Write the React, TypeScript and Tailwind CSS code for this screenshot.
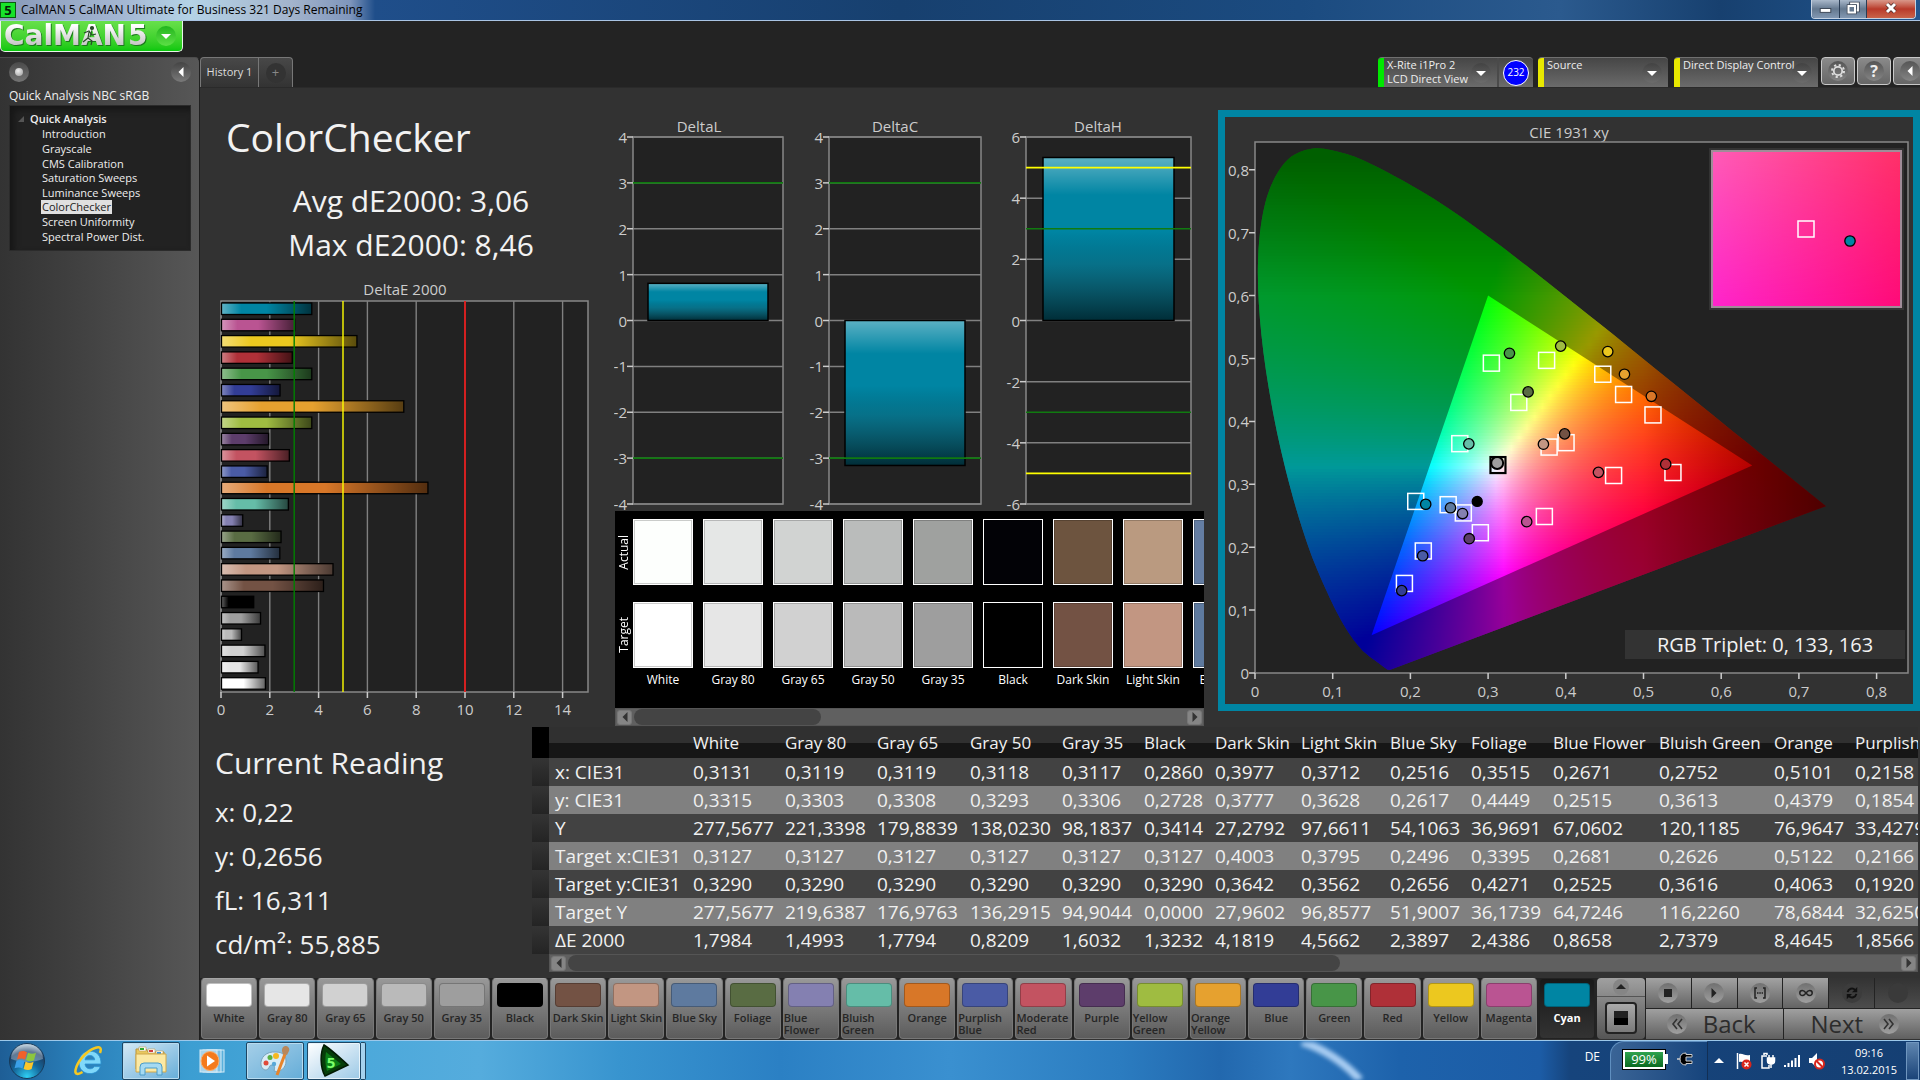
import type { ReactNode } from 'react'
import clsx from 'clsx'

interface Patch {
  name: string
  color: string
  actual: string
  dE: number
  x: number
  y: number
  tx: number
  ty: number
}

const PATCHES: Patch[] = [
  { name: 'White', color: '#ffffff', actual: '#fdfffd', dE: 1.8, x: 0.3131, y: 0.3315, tx: 0.3127, ty: 0.329 },
  { name: 'Gray 80', color: '#e6e6e6', actual: '#e5e7e6', dE: 1.5, x: 0.3119, y: 0.3303, tx: 0.3127, ty: 0.329 },
  { name: 'Gray 65', color: '#d1d1d1', actual: '#d1d3d2', dE: 1.78, x: 0.3119, y: 0.3308, tx: 0.3127, ty: 0.329 },
  { name: 'Gray 50', color: '#bababa', actual: '#babcbb', dE: 0.82, x: 0.3118, y: 0.3293, tx: 0.3127, ty: 0.329 },
  { name: 'Gray 35', color: '#9e9e9e', actual: '#9fa19f', dE: 1.6, x: 0.3117, y: 0.3306, tx: 0.3127, ty: 0.329 },
  { name: 'Black', color: '#000000', actual: '#020206', dE: 1.32, x: 0.286, y: 0.2728, tx: 0.3127, ty: 0.329 },
  { name: 'Dark Skin', color: '#735244', actual: '#6d543f', dE: 4.18, x: 0.3985, y: 0.3802, tx: 0.4003, ty: 0.3662 },
  { name: 'Light Skin', color: '#c29682', actual: '#ba9a80', dE: 4.57, x: 0.3712, y: 0.3638, tx: 0.3785, ty: 0.3592 },
  { name: 'Blue Sky', color: '#5e7a9f', actual: '#647da2', dE: 2.39, x: 0.2516, y: 0.2627, tx: 0.2486, ty: 0.2676 },
  { name: 'Foliage', color: '#596c43', actual: '#5c6d42', dE: 2.44, x: 0.3515, y: 0.4469, tx: 0.3395, ty: 0.4301 },
  { name: 'Blue Flower', color: '#8480b1', actual: '#8480b1', dE: 0.87, x: 0.2671, y: 0.2535, tx: 0.2681, ty: 0.2545 },
  { name: 'Bluish Green', color: '#65bda8', actual: '#65bda8', dE: 2.74, x: 0.2752, y: 0.3643, tx: 0.2636, ty: 0.3646 },
  { name: 'Orange', color: '#d87728', actual: '#d87728', dE: 8.46, x: 0.5101, y: 0.4399, tx: 0.5122, ty: 0.4103 },
  { name: 'Purplish Blue', color: '#4a5ba5', actual: '#4a5ba5', dE: 1.87, x: 0.2158, y: 0.1864, tx: 0.2166, ty: 0.194 },
  { name: 'Moderate Red', color: '#c35361', actual: '#c35361', dE: 2.78, x: 0.442, y: 0.319, tx: 0.4615, ty: 0.314 },
  { name: 'Purple', color: '#5d3d6b', actual: '#5d3d6b', dE: 1.93, x: 0.2757, y: 0.2135, tx: 0.29, ty: 0.223 },
  { name: 'Yellow Green', color: '#9fbc41', actual: '#9fbc41', dE: 3.7, x: 0.3934, y: 0.5197, tx: 0.3753, ty: 0.497 },
  { name: 'Orange Yellow', color: '#e6a12f', actual: '#e6a12f', dE: 7.47, x: 0.4755, y: 0.475, tx: 0.4744, ty: 0.4428 },
  { name: 'Blue', color: '#323d96', actual: '#323d96', dE: 2.4, x: 0.1888, y: 0.131, tx: 0.1923, ty: 0.1424 },
  { name: 'Green', color: '#489548', actual: '#489548', dE: 3.7, x: 0.3275, y: 0.5083, tx: 0.3042, ty: 0.4926 },
  { name: 'Red', color: '#af3038', actual: '#af3038', dE: 2.9, x: 0.5286, y: 0.332, tx: 0.5379, ty: 0.3187 },
  { name: 'Yellow', color: '#ecc81f', actual: '#ecc81f', dE: 5.55, x: 0.454, y: 0.511, tx: 0.4476, ty: 0.475 },
  { name: 'Magenta', color: '#ba5492', actual: '#ba5492', dE: 3, x: 0.3497, y: 0.2406, tx: 0.3724, ty: 0.2488 },
  { name: 'Cyan', color: '#0085a3', actual: '#0085a3', dE: 3.7, x: 0.2197, y: 0.2683, tx: 0.2069, ty: 0.2728 },
]

const TREE = [
  'Introduction',
  'Grayscale',
  'CMS Calibration',
  'Saturation Sweeps',
  'Luminance Sweeps',
  'ColorChecker',
  'Screen Uniformity',
  'Spectral Power Dist.',
]

const COLUMNS = [
  { name: 'White', width: 92 },
  { name: 'Gray 80', width: 92 },
  { name: 'Gray 65', width: 93 },
  { name: 'Gray 50', width: 92 },
  { name: 'Gray 35', width: 82 },
  { name: 'Black', width: 71 },
  { name: 'Dark Skin', width: 86 },
  { name: 'Light Skin', width: 89 },
  { name: 'Blue Sky', width: 81 },
  { name: 'Foliage', width: 82 },
  { name: 'Blue Flower', width: 106 },
  { name: 'Bluish Green', width: 115 },
  { name: 'Orange', width: 81 },
  { name: 'Purplish Blue', width: 120 },
]

const ROWS = [
  { label: 'x: CIE31', values: ['0,3131', '0,3119', '0,3119', '0,3118', '0,3117', '0,2860', '0,3977', '0,3712', '0,2516', '0,3515', '0,2671', '0,2752', '0,5101', '0,2158'] },
  { label: 'y: CIE31', values: ['0,3315', '0,3303', '0,3308', '0,3293', '0,3306', '0,2728', '0,3777', '0,3628', '0,2617', '0,4449', '0,2515', '0,3613', '0,4379', '0,1854'] },
  { label: 'Y', values: ['277,5677', '221,3398', '179,8839', '138,0230', '98,1837', '0,3414', '27,2792', '97,6611', '54,1063', '36,9691', '67,0602', '120,1185', '76,9647', '33,4279'] },
  { label: 'Target x:CIE31', values: ['0,3127', '0,3127', '0,3127', '0,3127', '0,3127', '0,3127', '0,4003', '0,3795', '0,2496', '0,3395', '0,2681', '0,2626', '0,5122', '0,2166'] },
  { label: 'Target y:CIE31', values: ['0,3290', '0,3290', '0,3290', '0,3290', '0,3290', '0,3290', '0,3642', '0,3562', '0,2656', '0,4271', '0,2525', '0,3616', '0,4063', '0,1920'] },
  { label: 'Target Y', values: ['277,5677', '219,6387', '176,9763', '136,2915', '94,9044', '0,0000', '27,9602', '96,8577', '51,9007', '36,1739', '64,7246', '116,2260', '78,6844', '32,6250'] },
  { label: 'ΔE 2000', values: ['1,7984', '1,4993', '1,7794', '0,8209', '1,6032', '1,3232', '4,1819', '4,5662', '2,3897', '2,4386', '0,8658', '2,7379', '8,4645', '1,8566'] },
]

/* ---------- title bar, logo ---------- */

function TitleBar() {
  return (
    <header className="flex h-[21px] items-center border-b border-[#a9c4e4] bg-[linear-gradient(90deg,#8799b8_0px,#a3b6d2_120px,#b4d3e6_190px,#a4b4cc_290px,#7f96bc_350px,#1f4e8a_375px,#17406f_900px,#1b4b80_1300px,#2b5a8e_1560px,#17406f_1720px,#22568f_100%)]">
      <svg viewBox="0 0 16 16" className="size-4 shrink-0 overflow-visible">
        <rect width="16" height="16" fill="#0a5c10" />
        <rect x="1" y="1" width="14" height="14" fill="#17e32a" />
        <text x="8" y="13" textAnchor="middle" fontSize="13" fontWeight="700" fill="#041f06">5</text>
      </svg>
      <h1 className="ml-[5px] flex-1 truncate text-[12px] leading-[18px] text-black">
        CalMAN 5 CalMAN Ultimate for Business 321 Days Remaining
      </h1>
      <div className="mr-1 flex h-[19px] self-start overflow-hidden rounded-b-[4px] border border-t-0 border-[#c5d2e2]">
        <button aria-label="Minimize" className="flex w-7 items-center justify-center border-r border-[#2a3d55] bg-linear-to-b from-[#a9b8ca] via-[#64788f] to-[#8398b2]">
          <svg viewBox="0 0 28 18" className="h-[18px] w-7">
            <rect x="8.500" y="8.500" width="11" height="4" fill="#fff" stroke="#3c4656" />
          </svg>
        </button>
        <button aria-label="Restore" className="flex w-[27px] items-center justify-center border-r border-[#2a3d55] bg-linear-to-b from-[#a9b8ca] via-[#64788f] to-[#8398b2]">
          <svg viewBox="0 0 18 18" className="size-[18px]" fill="#64788f">
            <path d="M7 3.500h7v7h-7z" stroke="#3c4656" strokeWidth="3.500" />
            <path d="M7 3.500h7v7h-7z" stroke="#fff" strokeWidth="1.800" />
            <path d="M4.500 6h6.500v6.500h-6.500z" stroke="#3c4656" strokeWidth="3.500" />
            <path d="M4.500 6h6.500v6.500h-6.500z" stroke="#fff" strokeWidth="2" />
          </svg>
        </button>
        <button aria-label="Close" className="flex w-12 items-center justify-center bg-linear-to-b from-[#d8978a] via-[#b8392a] to-[#c8634a]">
          <svg viewBox="0 0 18 18" className="size-[18px]">
            <path d="M5 4l8 8M13 4l-8 8" stroke="#4a2a2a" strokeWidth="4.500" />
            <path d="M5 4l8 8M13 4l-8 8" stroke="#fff" strokeWidth="3" />
          </svg>
        </button>
      </div>
    </header>
  )
}

function LogoBar() {
  return (
    <div className="h-9">
      <div className="flex h-[31px] w-[183px] items-center rounded-b-[5px] border border-t-0 border-[#e8f5e8] bg-linear-to-b from-[#67e04a] to-[#06c80c]">
        <svg viewBox="0 0 150 30" className="h-[30px] w-[150px] overflow-visible">
          <defs>
            <linearGradient id="silver" x1="0" y1="0" x2="0" y2="1">
              <stop offset="0.2" stopColor="#ffffff" />
              <stop offset="0.8" stopColor="#c4c4c4" />
            </linearGradient>
          </defs>
          <g fontFamily="DejaVu Sans" fontWeight="700" fontSize="28" fill="url(#silver)" className="drop-shadow-[1px_1px_0_#1c7a1c]">
            <text x="3" y="24">CalMAN</text>
            <text x="127" y="24">5</text>
          </g>
          <g stroke="#2b4a2b" strokeWidth="1.200" fill="none">
            <circle cx="91" cy="7" r="1.500" fill="#2b4a2b" />
            <path d="M83 12l5-2 3 4 4-1M88 11l-1 6 4 3-1 4M87 17l-5 4" />
          </g>
        </svg>
        <button aria-label="CalMAN menu" className="ml-[5px] flex size-5 items-center justify-center rounded-full bg-linear-to-b from-[#1fb51c] to-[#5be045]">
          <Triangle dir="down" color="#fff" />
        </button>
      </div>
    </div>
  )
}

function Triangle({ dir, color }: { dir: 'down' | 'left' | 'right' | 'up'; color: string }) {
  const paths = {
    down: 'M0 3h10l-5 5z',
    up: 'M0 7h10l-5-5z',
    left: 'M7.500 0v10l-5-5z',
    right: 'M2.500 0v10l5-5z',
  }
  return (
    <svg viewBox="0 0 10 10" className="size-2.5">
      <path d={paths[dir]} fill={color} />
    </svg>
  )
}

/* ---------- sidebar ---------- */

function Sidebar() {
  return (
    <aside className="w-[200px] shrink-0 rounded-tr-[5px] border-t border-r border-t-[#4c4c4c] border-r-[#1f1f1f] bg-linear-to-r from-[#333] to-[#575757] pr-2 pl-[9px]">
      <div className="flex h-7 items-center justify-between">
        <button aria-label="Record" className="flex size-5 items-center justify-center rounded-full bg-linear-to-b from-[#4a4a4a] to-[#747474]">
          <span className="size-2 rounded-full bg-[radial-gradient(circle_at_40%_35%,#eee,#999)]" />
        </button>
        <button aria-label="Collapse" className="flex size-5 items-center justify-center rounded-full bg-linear-to-b from-[#444] to-[#7a7a7a]">
          <Triangle dir="left" color="#fff" />
        </button>
      </div>
      <h2 className="truncate text-[12px] leading-[19px] text-[#eee]">Quick Analysis NBC sRGB</h2>
      <nav className="border border-[#2b2b2b] bg-[#222] pt-[5px] pb-1.5 shadow-[inset_4px_4px_6px_#161616]">
        <div className="flex h-4 items-center pl-2 text-[11px] font-semibold text-[#eee]">
          <svg viewBox="0 0 6 6" className="mr-1.5 size-1.5">
            <path d="M6 0v6h-6z" fill="#555" />
          </svg>
          Quick Analysis
        </div>
        <ul className="grid h-[117px] pl-[31px] text-[11px]">
          {TREE.map((item) => (
            <li key={item} className="flex items-center">
              <a
                href="#"
                className={clsx('px-px leading-[14px] whitespace-nowrap', item === 'ColorChecker' ? 'bg-[#e0e0e0] text-[#222]' : 'text-[#eee]')}
              >
                {item}
              </a>
            </li>
          ))}
        </ul>
      </nav>
    </aside>
  )
}

/* ---------- tabs and meters ---------- */

function MeterBox({ accent, lines, className, children }: { accent: string; lines: string[]; className: string; children?: ReactNode }) {
  return (
    <div className={clsx('flex h-[30px] overflow-hidden rounded-t-[4px] border-t border-[#707070] bg-linear-to-b from-[#464646] to-[#6b6b6b]', className)}>
      <span className={clsx('w-1.5', accent)} />
      <button className="flex flex-1 items-start justify-between pr-1.5 pl-[3px] text-left text-[11px] leading-[14px] whitespace-nowrap text-[#eee]">
        <span>
          {lines.map((line) => (
            <span key={line} className="block">{line}</span>
          ))}
        </span>
        <span className="-ml-3 mt-[5px] flex size-5 shrink-0 items-center justify-center rounded-full bg-linear-to-b from-[#3c3c3c]/60 to-[#707070]/60">
          <Triangle dir="down" color="#fff" />
        </span>
      </button>
      {children}
    </div>
  )
}

function SquareButton({ label, children }: { label: string; children: ReactNode }) {
  return (
    <button aria-label={label} className="flex h-7 w-[34px] items-center justify-center rounded-[4px] border border-[#c8c8c8] bg-linear-to-b from-[#8a8a8a] to-[#666]">
      <span className="flex size-5 items-center justify-center rounded-full bg-linear-to-b from-[#555] to-[#858585]">{children}</span>
    </button>
  )
}

function TabRow() {
  return (
    <div className="flex h-[31px] justify-between overflow-hidden border-b border-[#2a2a2a] bg-[#232323]">
      <div className="flex h-[30px] rounded-t-[4px] border border-b-0 border-[#777] bg-linear-to-b from-[#484848] to-[#333] text-[#ddd]">
        <button className="w-[58px] border-r border-[#777] text-[11px]">History 1</button>
        <button aria-label="Add history" className="flex w-[33px] items-center justify-center">
          <span className="flex size-5 items-center justify-center rounded-full bg-[#333] text-[13px] text-[#888]">+</span>
        </button>
      </div>
      <div className="flex">
        <MeterBox accent="bg-[#00e800]" lines={['X-Rite i1Pro 2', 'LCD Direct View']} className="mr-[5px] w-[155px]">
          <span className="flex w-9 items-center justify-center border-l-2 border-[#4a4a4a]">
            <span className="flex size-[26px] items-center justify-center rounded-full border border-white bg-[#0000ff] text-[10px] text-white">232</span>
          </span>
        </MeterBox>
        <MeterBox accent="bg-[#e8e800]" lines={['Source']} className="mr-[6px] w-[130px]" />
        <MeterBox accent="bg-[#e8e800]" lines={['Direct Display Control']} className="mr-[3px] w-[144px]" />
        <div className="-mr-[7px] flex gap-0.5">
          <SquareButton label="Settings">
            <svg viewBox="0 0 16 16" className="size-4">
              <circle cx="8" cy="8" r="4.200" fill="none" stroke="#ddd" strokeWidth="1.800" />
              <circle cx="8" cy="8" r="6" fill="none" stroke="#ddd" strokeWidth="2" strokeDasharray="2.200 2.512" />
            </svg>
          </SquareButton>
          <SquareButton label="Help">
            <span className="text-[16px] leading-5 font-bold text-[#eee]">?</span>
          </SquareButton>
          <SquareButton label="Hide">
            <Triangle dir="left" color="#fff" />
          </SquareButton>
        </div>
      </div>
    </div>
  )
}

/* ---------- charts ---------- */

function DeltaEChart() {
  const x0 = 21
  const unit = 24.4
  const top = 34
  const height = 391
  const pitch = height / 24
  const bars = [...PATCHES].reverse()
  return (
    <svg viewBox="0 0 414 455" className="block w-full" fontSize="15" fill="#ccc">
      <defs>
        <linearGradient id="gloss-x">
          <stop offset="0" stopColor="#fff" stopOpacity="0.38" />
          <stop offset="0.22" stopColor="#fff" stopOpacity="0" />
          <stop offset="0.5" stopColor="#000" stopOpacity="0" />
          <stop offset="1" stopColor="#000" stopOpacity="0.62" />
        </linearGradient>
      </defs>
      <text x="205" y="28" textAnchor="middle">DeltaE 2000</text>
      <rect x={x0} y={top} width="367" height={height} fill="#222" stroke="#888" strokeWidth="1.500" />
      {[0, 2, 4, 6, 8, 10, 12, 14].map((v) => (
        <g key={v}>
          <path d={`M${x0 + v * unit} ${top}V${top + height}`} stroke="#808080" strokeWidth="1.400" />
          <path d={`M${x0 + v * unit} ${top + height}v6`} stroke="#ccc" strokeWidth="1.500" />
          <text x={x0 + v * unit} y={top + height + 23} textAnchor="middle">{v}</text>
        </g>
      ))}
      {bars.map((p, i) => (
        <g key={p.name}>
          <rect x={x0 + 0.5} y={top + 2 + i * pitch} width={p.dE * unit} height="11.500" fill={p.color} />
          <rect x={x0 + 0.5} y={top + 2 + i * pitch} width={p.dE * unit} height="11.500" fill="url(#gloss-x)" stroke="#000" strokeWidth="1.300" />
        </g>
      ))}
      <path d={`M${x0 + 3 * unit} ${top}v${height}`} stroke="#008000" strokeWidth="1.400" />
      <path d={`M${x0 + 5 * unit} ${top}v${height}`} stroke="#ff0" strokeWidth="1.400" />
      <path d={`M${x0 + 10 * unit} ${top}v${height}`} stroke="#f01010" strokeWidth="1.600" />
    </svg>
  )
}

interface DeltaPlotProps {
  title: string
  titleX: number
  left: number
  width: number
  max: number
  step: number
  value: number
  barX: number
  barWidth: number
  limits: { at: number; color: string }[]
}

function DeltaPlot({ title, titleX, left, width, max, step, value, barX, barWidth, limits }: DeltaPlotProps) {
  const top = 49
  const height = 367
  const toY = (v: number) => top + ((max - v) / (2 * max)) * height
  const ticks: number[] = []
  for (let v = max; v >= -max; v -= step) ticks.push(v)
  const barTop = Math.min(toY(value), toY(0))
  const barHeight = Math.abs(toY(value) - toY(0))
  return (
    <g>
      <text x={titleX} y="44" textAnchor="middle">{title}</text>
      <rect x={left} y={top} width={width} height={height} fill="#222" stroke="#888" strokeWidth="1.500" />
      {ticks.map((v) => (
        <g key={v}>
          <path d={`M${left} ${toY(v)}h${width}`} stroke="#808080" strokeWidth="1.500" />
          <path d={`M${left - 6} ${toY(v)}h6`} stroke="#ccc" strokeWidth="1.500" />
          <text x={left - 6} y={toY(v) + 6} textAnchor="end">{v}</text>
        </g>
      ))}
      <rect x={barX} y={barTop} width={barWidth} height={barHeight} fill="#0085a3" />
      <rect x={barX} y={barTop} width={barWidth} height={barHeight} fill="url(#gloss-y)" stroke="#000" strokeWidth="1.500" />
      {limits.map((l) => (
        <path key={l.at} d={`M${left} ${toY(l.at)}h${width}`} stroke={l.color} strokeWidth="1.600" />
      ))}
    </g>
  )
}

function DeltaCharts() {
  const green = [
    { at: 3, color: '#107a10' },
    { at: -3, color: '#107a10' },
  ]
  return (
    <svg viewBox="0 0 604 423" className="block w-full" fontSize="15" fill="#ccc">
      <defs>
        <linearGradient id="gloss-y" x1="0" y1="0" x2="0" y2="1">
          <stop offset="0" stopColor="#fff" stopOpacity="0.36" />
          <stop offset="0.23" stopColor="#fff" stopOpacity="0" />
          <stop offset="0.45" stopColor="#000" stopOpacity="0" />
          <stop offset="0.65" stopColor="#222" stopOpacity="0.2" />
          <stop offset="1" stopColor="#000" stopOpacity="0.66" />
        </linearGradient>
      </defs>
      <DeltaPlot title="DeltaL" titleX={85} left={19} width={150} max={4} step={1} value={0.81} barX={34} barWidth={120} limits={green} />
      <DeltaPlot title="DeltaC" titleX={281} left={215} width={152} max={4} step={1} value={-3.16} barX={231} barWidth={120} limits={green} />
      <DeltaPlot
        title="DeltaH"
        titleX={484}
        left={412}
        width={165}
        max={6}
        step={2}
        value={5.33}
        barX={429}
        barWidth={131}
        limits={[...green, { at: 5, color: '#ff0' }, { at: -5, color: '#ff0' }]}
      />
    </svg>
  )
}

// CIE 1931 spectral locus, 380 nm to 700 nm
const LOCUS: [number, number][] = [
  [0.1741, 0.005], [0.1714, 0.0051], [0.1689, 0.0069], [0.1644, 0.0109], [0.1566, 0.0177], [0.144, 0.0297],
  [0.1355, 0.0399], [0.1241, 0.0578], [0.1096, 0.0868], [0.0913, 0.1327], [0.0687, 0.2007], [0.0454, 0.295],
  [0.0235, 0.4127], [0.0082, 0.5384], [0.0039, 0.6548], [0.0139, 0.7502], [0.0389, 0.812], [0.0743, 0.8338],
  [0.1142, 0.8262], [0.1547, 0.8059], [0.2296, 0.7543], [0.3016, 0.6923], [0.3731, 0.6245], [0.4441, 0.5547],
  [0.5125, 0.4866], [0.5752, 0.4242], [0.627, 0.3725], [0.6658, 0.334], [0.6915, 0.3083], [0.719, 0.2809],
  [0.7347, 0.2653],
]

const CIE = { left: 30, top: 25, width: 653, height: 531, unitX: 777, unitY: 629 }
const cieX = (x: number) => CIE.left + x * CIE.unitX
const cieY = (y: number) => CIE.top + CIE.height - y * CIE.unitY

function locusPath() {
  const pts = LOCUS.map(([x, y]) => [cieX(x), cieY(y)])
  let d = `M${pts[0][0]} ${pts[0][1]}`
  for (let i = 0; i < pts.length - 1; i++) {
    const a = pts[Math.max(i - 1, 0)]
    const b = pts[i]
    const c = pts[i + 1]
    const e = pts[Math.min(i + 2, pts.length - 1)]
    d += `C${b[0] + (c[0] - a[0]) / 6} ${b[1] + (c[1] - a[1]) / 6} ${c[0] - (e[0] - b[0]) / 6} ${c[1] - (e[1] - b[1]) / 6} ${c[0]} ${c[1]}`
  }
  return d + 'Z'
}

// chromaticity to the brightest sRGB colour, fading towards deep green and deep red
function xyColor(x: number, y: number) {
  const yy = Math.max(y, 0.001)
  const X = x / yy
  const Z = (1 - x - yy) / yy
  const rgb = [
    3.2406 * X - 1.5372 - 0.4986 * Z,
    -0.9689 * X + 1.8758 + 0.0415 * Z,
    0.0557 * X - 0.204 + 1.057 * Z,
  ].map((c) => Math.max(c, 0))
  const max = Math.max(...rgb, 0.0001)
  const fadeGreen = 1 - 0.38 * Math.min(Math.max((y - 0.6) / 0.22, 0), 1)
  const fadeRed = 1 - 2.1 * Math.max(x - 0.5, 0)
  const out = rgb.map((c) => Math.round(255 * Math.pow(c / max, 0.9) * fadeGreen * fadeRed))
  return `rgb(${out.join(',')})`
}

const BAND = 3
const BANDS = Array.from({ length: Math.ceil(CIE.height / BAND) }, (_, i) => {
  const y = (CIE.height - (i + 0.5) * BAND) / CIE.unitY
  const stops = Array.from({ length: 75 }, (_, s) => xyColor(s / 100, y))
  return { top: CIE.top + i * BAND, stops }
})

const LOCUS_PATH = locusPath()
const GAMUT_PATH = `M${cieX(0.64)} ${cieY(0.33)}L${cieX(0.3)} ${cieY(0.6)}L${cieX(0.15)} ${cieY(0.06)}Z`

function CieChart() {
  const ticks = [0, 1, 2, 3, 4, 5, 6, 7, 8]
  const marks = PATCHES.filter((p) => !/White|Gray|Black/.test(p.name))
  const black = PATCHES[5]
  const gray = PATCHES[4]
  return (
    <svg viewBox="0 0 688 587" className="block w-full" fontSize="15" fill="#ccc">
      <defs>
        <clipPath id="locus">
          <path d={LOCUS_PATH} />
        </clipPath>
        {BANDS.map((b, i) => (
          <linearGradient key={i} id={`band-${i}`}>
            {b.stops.map((c, s) => (
              <stop key={s} offset={s / 74} stopColor={c} />
            ))}
          </linearGradient>
        ))}
        <linearGradient id="inset-a" x1="0" y1="0" x2="1" y2="0">
          <stop offset="0" stopColor="#ff5cb8" />
          <stop offset="1" stopColor="#ff3068" />
        </linearGradient>
        <linearGradient id="inset-b" x1="0" y1="0" x2="1" y2="0">
          <stop offset="0" stopColor="#ff24cc" />
          <stop offset="1" stopColor="#ff0a78" />
        </linearGradient>
        <linearGradient id="inset-fade" x1="0" y1="0" x2="0" y2="1">
          <stop offset="0" stopColor="#000" />
          <stop offset="1" stopColor="#fff" />
        </linearGradient>
        <mask id="inset-mask">
          <rect x="487" y="34" width="189" height="156" fill="url(#inset-fade)" />
        </mask>
      </defs>
      <text x="344" y="21" textAnchor="middle">CIE 1931 xy</text>
      <rect x={CIE.left} y={CIE.top} width={CIE.width} height={CIE.height} fill="#222" stroke="#888" strokeWidth="1.500" />
      {ticks.map((t) => (
        <g key={t}>
          <path d={`M${cieX(t / 10)} ${CIE.top + CIE.height}v6M${CIE.left - 6} ${cieY(t / 10)}h6`} stroke="#ccc" strokeWidth="1.500" />
          <text x={cieX(t / 10)} y="580" textAnchor="middle">{t === 0 ? '0' : `0,${t}`}</text>
          <text x={CIE.left - 6} y={cieY(t / 10) + 6} textAnchor="end">{t === 0 ? '0' : `0,${t}`}</text>
        </g>
      ))}
      <g clipPath="url(#locus)">
        {BANDS.map((b, i) => (
          <rect key={i} x={CIE.left} y={b.top} width={0.74 * CIE.unitX} height={BAND} fill={`url(#band-${i})`} shapeRendering="crispEdges" />
        ))}
      </g>
      <path d={LOCUS_PATH + GAMUT_PATH} fill="#000" fillOpacity="0.4" fillRule="evenodd" />
      <g fill="none" stroke="#fff" strokeWidth="1.500">
        {marks.map((p) => (
          <rect key={p.name} x={cieX(p.tx) - 8} y={cieY(p.ty) - 8} width="16" height="16" />
        ))}
      </g>
      <g stroke="#000" strokeWidth="1.300">
        {marks.map((p) => (
          <circle key={p.name} cx={cieX(p.x)} cy={cieY(p.y)} r="5.200" fill={p.color} />
        ))}
        <circle cx={cieX(black.x)} cy={cieY(black.y)} r="5" fill="#000" />
        <rect x={cieX(gray.tx) - 7.5} y={cieY(gray.ty) - 9} width="15" height="16" fill="none" strokeWidth="2.200" />
        <circle cx={cieX(gray.x)} cy={cieY(gray.y) - 2} r="6" fill={gray.color} strokeWidth="2" />
      </g>
      <rect x="484" y="31" width="195" height="162" fill="#333" />
      <rect x="487" y="34" width="189" height="156" fill="url(#inset-a)" />
      <rect x="487" y="34" width="189" height="156" fill="url(#inset-b)" mask="url(#inset-mask)" />
      <rect x="487" y="34" width="189" height="156" fill="none" stroke="#a08c98" strokeWidth="2" />
      <rect x="573" y="104" width="16" height="16" fill="none" stroke="#fff" strokeWidth="1.500" />
      <circle cx="625" cy="124" r="5.200" fill="#0085a3" stroke="#000" strokeWidth="1.300" />
      <rect x="400" y="513" width="280" height="29" fill="#333" />
      <text x="540" y="535" textAnchor="middle" fontSize="20" fill="#f2f2f2">RGB Triplet: 0, 133, 163</text>
    </svg>
  )
}

/* ---------- swatches and table ---------- */

function ScrollBar({ thumb }: { thumb: string }) {
  return (
    <div className="flex h-[18px] items-center border border-[#555] bg-[#606060] px-px">
      <button aria-label="Scroll left" className="flex size-[15px] items-center justify-center rounded-[3px] border border-[#777] bg-[#858585]">
        <Triangle dir="left" color="#333" />
      </button>
      <div className="mx-0.5 flex-1">
        <div className={clsx('h-4 rounded-[8px] bg-[#444]', thumb)} />
      </div>
      <button aria-label="Scroll right" className="flex size-[15px] items-center justify-center rounded-[3px] border border-[#777] bg-[#858585]">
        <Triangle dir="right" color="#333" />
      </button>
    </div>
  )
}

function SwatchRow({ label, field }: { label: string; field: 'actual' | 'color' }) {
  return (
    <div className="flex">
      <div className="flex w-[18px] shrink-0 items-center justify-center">
        <span className="rotate-180 text-[12px] leading-4 font-medium [writing-mode:vertical-rl]">{label}</span>
      </div>
      <div className="flex gap-[10px] overflow-hidden">
        {PATCHES.slice(0, 9).map((p) => (
          <div key={p.name} className="w-[60px] shrink-0">
            <div className="h-[66px] border border-white shadow-[inset_0_0_0_1px_rgba(0,0,0,0.2)]" style={{ backgroundColor: p[field] }} />
          </div>
        ))}
      </div>
    </div>
  )
}

function SwatchPanel() {
  return (
    <section className="mr-[14px] ml-px">
      <div className="h-[197px] overflow-hidden bg-black pt-2 text-white">
        <SwatchRow label="Actual" field="actual" />
        <div className="h-[17px]" />
        <SwatchRow label="Target" field="color" />
        <div className="flex gap-[10px] overflow-hidden pl-[18px]">
          {PATCHES.slice(0, 9).map((p) => (
            <span key={p.name} className="w-[60px] shrink-0 pt-[3px] text-center text-[12px] leading-[18px] whitespace-nowrap">
              {p.name}
            </span>
          ))}
        </div>
      </div>
      <ScrollBar thumb="w-[34%]" />
    </section>
  )
}

function Reading() {
  return (
    <section className="pt-[14px] pl-[15px] text-[26px] leading-[44px] text-[#f0f0f0]">
      <h3 className="mb-[5px] text-[30px] leading-[44px]">Current Reading</h3>
      <p>x: 0,22</p>
      <p>y: 0,2656</p>
      <p>fL: 16,311</p>
      <p>cd/m²: 55,885</p>
    </section>
  )
}

function DataTable() {
  return (
    <section className="mr-0.5 min-w-0">
      <div className="overflow-hidden">
        <table className="w-[1437px] table-fixed border-collapse text-left whitespace-nowrap">
          <colgroup>
            <col className="w-[17px]" />
            <col className="w-[138px]" />
            {COLUMNS.map((c) => (
              <col key={c.name} style={{ width: c.width }} />
            ))}
          </colgroup>
          <thead>
            <tr className="h-[31px] text-[17px] text-[#f0f0f0]">
              <td className="bg-black" />
              <td className="bg-[linear-gradient(#303030_50%,#161616_50%)]" />
              {COLUMNS.map((c) => (
                <th key={c.name} scope="col" className="bg-[linear-gradient(#303030_50%,#161616_50%)] p-0 pl-1.5 font-normal">
                  {c.name}
                </th>
              ))}
            </tr>
          </thead>
          <tbody>
            {ROWS.map((row, i) => (
              <tr key={row.label} className={clsx('h-7 text-[19px] leading-7 text-[#f0f0f0]', i % 2 ? 'bg-[#808080]' : 'bg-[#424242]')}>
                <td className="bg-linear-to-b from-[#343434] to-[#242424]" />
                <th scope="row" className="p-0 pl-1.5 font-normal">{row.label}</th>
                {row.values.map((v, j) => (
                  <td key={j} className="p-0 pl-1.5">{v}</td>
                ))}
              </tr>
            ))}
          </tbody>
        </table>
      </div>
      <div className="pl-[17px]">
        <ScrollBar thumb="w-[58%]" />
      </div>
    </section>
  )
}

/* ---------- patch buttons and transport ---------- */

function PatchBar() {
  return (
    <div className="flex min-w-0 flex-1 gap-0.5 pl-px">
      {PATCHES.map((p) => {
        const active = p.name === 'Cyan'
        return (
          <button
            key={p.name}
            className={clsx(
              'flex min-w-0 flex-1 flex-col items-center rounded-[4px] border pt-1 text-[11px] leading-3',
              active ? 'border-[#222] bg-linear-to-b from-[#181818] to-[#333] font-bold text-white' : 'border-[#777] border-t-[#a5a5a5] bg-linear-to-b from-[#989898] to-[#5c5c5c] font-semibold text-[#262626]',
            )}
          >
            <span className="mb-[5px] block h-6 w-[46px] shrink-0 rounded-[4px] border border-black/25" style={{ backgroundColor: p.color }} />
            <span className="text-left">{p.name}</span>
          </button>
        )
      })}
    </div>
  )
}

function Round({ children }: { children?: ReactNode }) {
  return <span className="flex size-5 items-center justify-center rounded-full bg-linear-to-b from-[#707070] to-[#a0a0a0]">{children}</span>
}

function Transport() {
  const tool = 'flex flex-1 items-center justify-center bg-linear-to-b from-[#a2a2a2] to-[#646464]'
  const dark = 'flex flex-1 items-center justify-center bg-linear-to-b from-[#333] to-[#4c4c4c]'
  return (
    <div className="flex h-[61px]">
      <div className="mr-px flex w-12 flex-col overflow-hidden rounded-[4px] bg-linear-to-b from-[#a0a0a0] to-[#555]">
        <button aria-label="Expand" className="flex h-[19px] items-center justify-center border-b border-[#555]">
          <span className="flex size-4 items-center justify-center rounded-full bg-[#858585]">
            <Triangle dir="up" color="#222" />
          </span>
        </button>
        <button aria-label="Pattern window" className="m-auto flex size-8 items-center justify-center rounded-[4px] border-2 border-[#222] bg-linear-to-b from-[#aaa] to-[#7a7a7a]">
          <span className="size-3.5 bg-[linear-gradient(#222_50%,#000_50%)]" />
        </button>
      </div>
      <div className="flex w-[274px] flex-col gap-px">
        <div className="flex h-[30px] gap-px">
          <button aria-label="Stop" className={tool}>
            <Round><span className="size-2 bg-[#222]" /></Round>
          </button>
          <button aria-label="Play" className={tool}>
            <Round><Triangle dir="right" color="#222" /></Round>
          </button>
          <button aria-label="Read series" className={tool}>
            <Round>
              <svg viewBox="0 0 16 16" className="size-4" fill="none" stroke="#222" strokeWidth="1.500">
                <path d="M5 3H3v10h2M11 3h2v10h-2" />
                <path d="M5 8h6" strokeDasharray="1.500 0.800" />
              </svg>
            </Round>
          </button>
          <button aria-label="Read continuous" className={tool}>
            <Round>
              <svg viewBox="0 0 16 16" className="size-4" fill="none" stroke="#222" strokeWidth="1.500">
                <path d="M8 8c-1.500-2-2.500-2.500-3.700-2.500a2.500 2.500 0 0 0 0 5c1.200 0 2.200-.5 3.700-2.500 1.500-2 2.500-2.500 3.700-2.500a2.500 2.500 0 0 1 0 5c-1.200 0-2.200-.5-3.700-2.500z" />
              </svg>
            </Round>
          </button>
          <button aria-label="Refresh" className={dark}>
            <span className="flex size-5 items-center justify-center rounded-full bg-[#3c3c3c]">
              <svg viewBox="0 0 16 16" className="size-3.5" fill="none" stroke="#111" strokeWidth="2.200">
                <path d="M3 7a5 5 0 0 1 8.500-2.500M13 9a5 5 0 0 1-8.500 2.500" />
                <path d="M14 1v6H8zM2 15V9h6z" fill="#111" stroke="none" />
              </svg>
            </span>
          </button>
          <button aria-label="Record" className={dark}>
            <span className="size-5 rounded-full bg-[#3a3a3a]" />
          </button>
        </div>
        <div className="flex h-[30px] gap-px text-[24px] leading-7 font-medium text-[#2c2c2c]">
          <button className="flex flex-1 items-center justify-center gap-4 bg-linear-to-b from-[#a0a0a0] to-[#606060] pr-1.5">
            <Round>
              <svg viewBox="0 0 16 16" className="size-4" fill="none" stroke="#333" strokeWidth="1.600">
                <path d="M8 3L4 8l4 5M13 3L9 8l4 5" />
              </svg>
            </Round>
            Back
          </button>
          <button className="flex flex-1 items-center justify-center gap-4 bg-linear-to-b from-[#a0a0a0] to-[#606060] pl-1.5">
            Next
            <Round>
              <svg viewBox="0 0 16 16" className="size-4" fill="none" stroke="#333" strokeWidth="1.600">
                <path d="M3 3l4 5-4 5M8 3l4 5-4 5" />
              </svg>
            </Round>
          </button>
        </div>
      </div>
    </div>
  )
}

/* ---------- windows taskbar ---------- */

function StartOrb() {
  return (
    <svg viewBox="0 0 38 38" className="size-[38px]">
      <defs>
        <radialGradient id="orb" cx="0.5" cy="0.95" r="0.9">
          <stop offset="0" stopColor="#2fd0f4" />
          <stop offset="0.45" stopColor="#14689c" />
          <stop offset="0.8" stopColor="#1d3f66" />
          <stop offset="1" stopColor="#9ab4c8" />
        </radialGradient>
      </defs>
      <circle cx="19" cy="19" r="17.500" fill="url(#orb)" stroke="#173a5a" />
      <path d="M3 17a16 15 0 0 1 32 0c-10 4-22 4-32 0z" fill="#fff" fillOpacity="0.3" />
      <path d="M11 10c3-1.500 5-1.500 8 .2l-2 7.500c-2.500-1.500-5-1.500-8-.3z" fill="#f0602a" />
      <path d="M20 10.800c3 1.500 5.500 1.300 8 0l-2 7.400c-2.500 1.500-5 1.300-8-.2z" fill="#8cc63e" />
      <path d="M8.500 18.800c3-1.300 5.300-1 8 .3l-2 7.500c-2.500-1.500-5-1.500-8-.3z" fill="#3aa0e8" />
      <path d="M17.600 19.500c3 1.600 5.300 1.500 8 .2l-2 7.300c-2.500 1.500-5 1.300-8-.1z" fill="#fcc62a" />
    </svg>
  )
}

function IeIcon() {
  return (
    <svg viewBox="0 0 34 34" className="size-[34px]" fill="none">
      <path d="M29 20H13c.3 3 2.200 4.800 5 4.800 2 0 3.400-.8 4.300-2.200h6c-1.500 4.500-5.200 7-10.300 7-6.500 0-11-4.300-11-11s4.500-11.400 11-11.400c7 0 11.300 4.700 11 12.800zM13 15.800h9.700c-.3-2.700-2-4.300-4.800-4.300s-4.500 1.600-4.900 4.300z" fill="#7fd8fa" stroke="#2a90d0" strokeWidth="0.800" />
      <path d="M28 9c2-5 0-7-5-5C14 7 5 18 3.500 26c-.8 4.500 2.500 5 7 2" stroke="#f6c820" strokeWidth="2.500" />
    </svg>
  )
}

function ExplorerIcon() {
  return (
    <svg viewBox="0 0 34 32" className="h-8 w-[34px]">
      <path d="M2 4h10l2 3h16v17H2z" fill="#e8c860" stroke="#b8923a" />
      <path d="M5 2h7v4H5zM14 4h7v4h-7zM22 6h7v3h-7z" fill="#fff" stroke="#c0a050" strokeWidth="0.600" />
      <path d="M6 3h4v2H6z" fill="#30a830" />
      <path d="M15 5h4v2h-4z" fill="#d04040" />
      <path d="M23 7h4v2h-4z" fill="#3090e0" />
      <path d="M2 9h30v18H2z" fill="#fbe9a4" stroke="#d0a84a" />
      <path d="M6 30v-8q0-4 4-4h14q4 0 4 4v8h-5v-7H11v7z" fill="#a5daf2" stroke="#4a9cc8" />
    </svg>
  )
}

function MediaIcon() {
  return (
    <svg viewBox="0 0 28 26" className="h-[26px] w-7">
      <rect x="8" y="2" width="17" height="22" fill="#5ab0dc" stroke="#d5ecf8" />
      <rect x="4" y="2" width="18" height="22" fill="#7cc0e4" stroke="#d5ecf8" />
      <rect x="1" y="2" width="17" height="22" fill="#a8d4ec" stroke="#d5ecf8" />
      <ellipse cx="11" cy="13" rx="9" ry="9.500" fill="#f47a1c" stroke="#fbb070" />
      <path d="M8 7.500l8 5.500-8 5.500z" fill="#fff" />
    </svg>
  )
}

function PaintIcon() {
  return (
    <svg viewBox="0 0 34 34" className="size-[34px]">
      <path d="M18 8C8 7 2 14 3 21c1 5 5 6 7 4s1-4 4-4 3 3 2 6c6 2 12-3 12-10 0-6-4-9-10-9z" fill="#d8ecf6" stroke="#7aa4bc" />
      <circle cx="8" cy="19" r="2.500" fill="#e04a3a" />
      <circle cx="12" cy="13.500" r="2.500" fill="#58b040" />
      <circle cx="18" cy="12" r="3" fill="#f6b820" />
      <circle cx="16" cy="20" r="2.200" fill="#58a8d8" />
      <path d="M27 10L19 31" stroke="#e8842a" strokeWidth="3" />
      <path d="M25 10c-2-4-1-7 2-8 3 0 5 2 4 5l-2 4z" fill="#b8875a" />
    </svg>
  )
}

function CalmanIcon() {
  return (
    <svg viewBox="0 0 32 34" className="h-[34px] w-8">
      <path d="M6 1C2 9 2 23 7 32L30 21C22 14 14 6 6 1z" fill="#063d0a" stroke="#021a03" strokeWidth="1.500" />
      <path d="M8 8c-1 6-1 13 1 19l14-7C18 16 13 12 8 8z" fill="#0b7d16" />
      <text x="13" y="24" textAnchor="middle" fontSize="15" fontWeight="700" fill="#7dff6a">5</text>
    </svg>
  )
}

function Taskbar() {
  return (
    <footer className="flex h-10 items-center justify-between border-t border-[#9cc8ea] bg-[linear-gradient(90deg,#1e5e96_0px,#2a80ba_80px,#3c9ed2_190px,#4aa8da_330px,#55acdd_480px,#3894cf_620px,#2b80c4_780px,#3a90d0_950px,#2b7cc0_1120px,#2268ae_1220px,#2e78be_1290px,#1d62ab_1400px,#1c5ca6_1540px,#16447c_1570px,#153f73_100%)]">
      <div className="flex h-full items-center">
        <button aria-label="Start" className="ml-2">
          <StartOrb />
        </button>
        <button aria-label="Internet Explorer" className="ml-[26px]">
          <IeIcon />
        </button>
        <button aria-label="Explorer" className="ml-[16px] flex h-[38px] w-[58px] items-center justify-center rounded-[2px] border border-[#1d4664] bg-linear-to-br from-[#d5e9f5] to-[#64add8] shadow-[inset_0_0_0_1px_#b8dcf0]">
          <ExplorerIcon />
        </button>
        <button aria-label="Media Player" className="ml-[19px]">
          <MediaIcon />
        </button>
        <button aria-label="Paint" className="ml-[19px] flex h-[38px] w-[58px] items-center justify-center rounded-[2px] border border-[#1d4664] bg-linear-to-br from-[#a5cfe8] to-[#64add8] shadow-[inset_0_0_0_1px_#b8dcf0]">
          <PaintIcon />
        </button>
        <button aria-label="CalMAN 5" className="ml-[3px] flex h-[38px] w-[54px] items-center justify-center rounded-[2px] border border-[#1d4664] bg-linear-to-br from-white to-[#9cc9e6] shadow-[inset_0_0_0_1px_#e8f4fb]">
          <CalmanIcon />
        </button>
        <span className="h-[38px] w-[5px] rounded-r-[2px] border border-l-0 border-[#1d4664] bg-[#a5d2ee]" />
      </div>
      {/* light streak of the aero glass */}
      <svg viewBox="0 0 90 38" className="mr-auto ml-[926px] h-[38px] w-[90px] shrink blur-[2px]">
        <path d="M10 0C30 6 52 20 68 38" fill="none" stroke="#a9cdf2" strokeWidth="8" />
      </svg>
      <div className="flex h-full items-center text-[11px] text-white">
        <button className="mr-[10px] pb-2 text-[12px]">DE</button>
        <div className="flex h-full w-[98px] items-center gap-2 rounded-tl-[14px] border-t border-r border-l border-[#5f8fc0] border-r-[#122f55] bg-linear-to-r from-[#3a6496] to-[#16447c] pl-3">
          <span className="flex items-center pb-1">
            <span className="flex h-[19px] w-[42px] items-center justify-center border-2 border-white bg-linear-to-b from-[#2fa34e] to-[#0a6a20] text-[13px] leading-4 outline outline-black">99%</span>
            <span className="h-2.5 w-[3px] bg-white" />
          </span>
          <svg viewBox="0 0 18 14" className="mb-1 h-3.5 w-[18px]">
            <path d="M1 7h3q0-6 6-6v1.500h6v2.500h-6v4h6v2.500h-6V13q-6 0-6-6z" fill="#000" stroke="#ccc" />
          </svg>
        </div>
        <button aria-label="Show hidden icons" className="ml-1.5">
          <Triangle dir="up" color="#fff" />
        </button>
        <div className="ml-3 flex items-center gap-2">
          <svg viewBox="0 0 16 18" className="h-[18px] w-4">
            <path d="M1.500 1v16" stroke="#fff" strokeWidth="1.500" />
            <path d="M3 2c4-1 5 2 11 1v8c-6 1-7-2-11-1z" fill="#fff" />
            <circle cx="10.500" cy="12.500" r="5" fill="#d8261c" />
            <path d="M8.500 10.500l4 4m0-4l-4 4" stroke="#fff" strokeWidth="1.500" />
          </svg>
          <svg viewBox="0 0 16 18" className="h-[18px] w-4" fill="none" stroke="#fff" strokeWidth="1.500">
            <path d="M7 4H2v12h7V13M4 3V1.500h3V3" />
            <path d="M7.500 6h7v3q0 3-3.500 3t-3.500-3zM9 6V3M13 6V3M11 12v4" fill="#fff" />
          </svg>
          <svg viewBox="0 0 16 14" className="h-3.5 w-4" fill="#fff">
            <path d="M0 11h2v2H0zM3.500 9h2v4h-2zM7 6.500h2V13H7zM10.500 4h2v9h-2zM14 1h2v12h-2z" />
          </svg>
          <svg viewBox="0 0 18 18" className="size-[18px]">
            <path d="M1 6h3l5-5v15l-5-5H1z" fill="#fff" />
            <circle cx="11.500" cy="12" r="4.500" fill="#fff" stroke="#d8261c" strokeWidth="2" />
            <path d="M8.500 9l6 6" stroke="#d8261c" strokeWidth="2" />
          </svg>
        </div>
        <div className="ml-2.5 w-[66px] text-center leading-[17px]">
          <time className="block">09:16</time>
          <time className="block">13.02.2015</time>
        </div>
        <button aria-label="Show desktop" className="mr-px ml-1 h-[38px] w-[13px] border border-[#6f96bf] bg-linear-to-b from-[#5f86b0] to-[#1a4478]" />
      </div>
    </footer>
  )
}

export default function App() {
  return (
    <div className="flex min-h-screen flex-col overflow-hidden bg-[#232323] font-['Open_Sans','Noto_Sans',sans-serif]">
      <TitleBar />
      <LogoBar />
      <div className="flex flex-1">
        <Sidebar />
        <main className="flex min-w-0 flex-1 flex-col bg-[#323232]">
          <TabRow />
          <div className="grid grid-cols-[minmax(0,414fr)_minmax(0,604fr)_minmax(0,702fr)] items-start">
            <section className="pt-[25px] text-[#f2f2f2]">
              <h2 className="pl-[26px] text-[39px] leading-[48px]">ColorChecker</h2>
              <div className="mt-[18px] pl-2 text-center text-[30px] leading-[44px]">
                <p>Avg dE2000: 3,06</p>
                <p>Max dE2000: 8,46</p>
              </div>
              <DeltaEChart />
            </section>
            <section>
              <DeltaCharts />
              <SwatchPanel />
            </section>
            <section className="mt-[22px] border-[7px] border-[#0085a3]">
              <CieChart />
            </section>
          </div>
          <div className="mt-px grid flex-1 grid-cols-[minmax(0,332fr)_minmax(0,1388fr)]">
            <Reading />
            <DataTable />
          </div>
          <div className="mt-1 mb-px flex gap-0.5 bg-[#232323]">
            <PatchBar />
            <Transport />
          </div>
        </main>
      </div>
      <Taskbar />
    </div>
  )
}
